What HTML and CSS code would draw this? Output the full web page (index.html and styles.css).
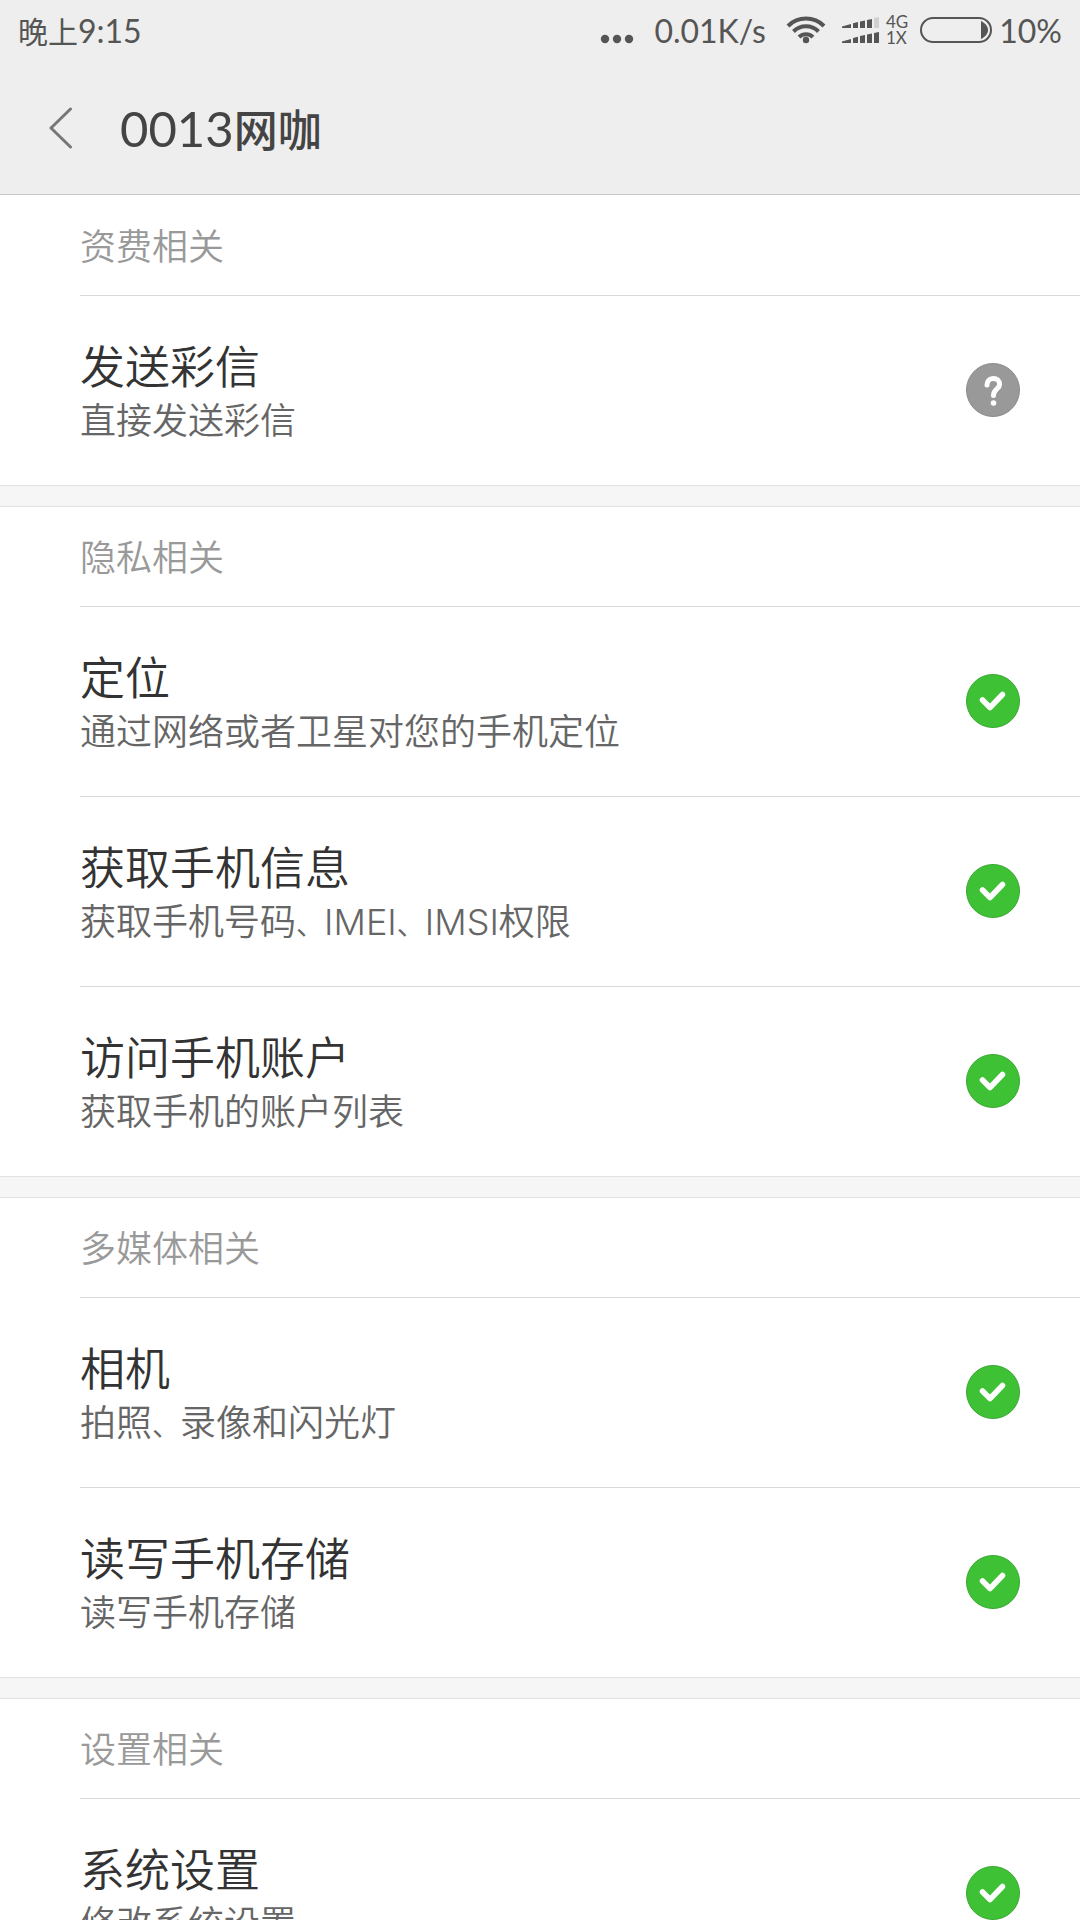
FILE: index.html
```html
<!DOCTYPE html>
<html lang="zh-CN">
<head>
  <meta charset="utf-8">
  <meta name="viewport" content="width=device-width, initial-scale=1">
  <title>0013网咖</title>
  <link rel="stylesheet" href="styles.css">
</head>
<body>

<!-- 图标 -->
<svg class="sprite" aria-hidden="true">
  <symbol id="icon-check" viewBox="0 0 54 54">
    <circle cx="27" cy="27" r="26.5" fill="#3fc136" stroke="#3aa832"/>
    <path d="M16.500 26l7.500 7.500 12.500-13" fill="none" stroke="#fff" stroke-width="5.500" stroke-linecap="round" stroke-linejoin="round"/>
  </symbol>
  <symbol id="icon-ask" viewBox="0 0 54 54">
    <circle cx="27" cy="27" r="26.500" fill="#999" stroke="#8c8c8c"/>
    <path d="M21 22c0-4 2.500-6.500 6.300-6.500s6.300 2.300 6.300 5.700c0 5-6.100 4.600-6.100 11.300" fill="none" stroke="#fff" stroke-width="5" stroke-linecap="round"/>
    <circle cx="27.500" cy="40" r="2.800" fill="#fff"/>
  </symbol>
</svg>

<header class="header">
  <div class="status-bar">
    <div class="clock">晚上<span class="num">9:15</span></div>
    <div class="status-icons">
      <svg class="dots" width="34" height="54" viewBox="0 0 34 54" fill="#555">
        <circle cx="5" cy="39" r="4.200"/>
        <circle cx="17" cy="39" r="4.200"/>
        <circle cx="29" cy="39" r="4.200"/>
      </svg>
      <span class="num speed">0.01K/s</span>
      <svg class="wifi" width="40" height="54" viewBox="0 0 40 54" fill="none" stroke="#555" stroke-width="4">
        <path d="M2 26a25.500 25.500 0 0 1 36 0"/>
        <path d="M7.500 31.500a17.700 17.700 0 0 1 25 0"/>
        <path d="M13 37a10 10 0 0 1 14 0"/>
        <circle cx="20" cy="40" r="3.200" fill="#555" stroke="none"/>
      </svg>
      <svg class="signal" width="38" height="54" viewBox="0 0 38 54" fill="#555">
        <path d="M0 28v-1.500l9-2.500v4zM11 28v-4.700l5-1.300v6zM18 28v-6.500l5-1v7.500zM25 28v-8l5-1v9z"/>
        <path d="M32 28V18l5-1v11z" fill="#d0d0d0"/>
        <path d="M0 43v-1.500l9-2.500v4zM11 43v-5l5-1.300v6.300zM18 43v-7l5-1v8zM25 43v-8.500l5-1V43zM32 43V33l5-1v11z"/>
      </svg>
      <span class="network"><span>4G</span><span>1X</span></span>
      <svg class="battery" width="72" height="54" viewBox="0 0 72 54">
        <rect x="1" y="18" width="70" height="24" rx="12" fill="none" stroke="#555" stroke-width="2"/>
        <path d="M61 21c4 2 7 5 7 9s-3 7-7 9z" fill="#555"/>
      </svg>
      <span class="num">10%</span>
    </div>
  </div>
  <div class="title-bar">
    <button class="back" type="button" aria-label="返回">
      <svg width="24" height="42" viewBox="0 0 24 42" fill="none" stroke="#777" stroke-width="3" stroke-linecap="round" stroke-linejoin="round">
        <path d="M21.500 2L2 21l19.500 19"/>
      </svg>
    </button>
    <h1 class="title"><span class="num">0013</span>网咖</h1>
  </div>
</header>

<main class="groups">
  <section class="group">
    <h2 class="group-title">资费相关</h2>
    <ul class="list">
      <li><button class="item" type="button">
        <span class="text"><span class="name">发送彩信</span><span class="desc">直接发送彩信</span></span>
        <svg class="state"><use href="#icon-ask"/></svg>
      </button></li>
    </ul>
  </section>

  <section class="group">
    <h2 class="group-title">隐私相关</h2>
    <ul class="list">
      <li><button class="item" type="button">
        <span class="text"><span class="name">定位</span><span class="desc">通过网络或者卫星对您的手机定位</span></span>
        <svg class="state"><use href="#icon-check"/></svg>
      </button></li>
      <li><button class="item" type="button">
        <span class="text"><span class="name">获取手机信息</span><span class="desc">获取手机号码<span class="mark">、</span>IMEI<span class="mark">、</span>IMSI权限</span></span>
        <svg class="state"><use href="#icon-check"/></svg>
      </button></li>
      <li><button class="item" type="button">
        <span class="text"><span class="name">访问手机账户</span><span class="desc">获取手机的账户列表</span></span>
        <svg class="state"><use href="#icon-check"/></svg>
      </button></li>
    </ul>
  </section>

  <section class="group">
    <h2 class="group-title">多媒体相关</h2>
    <ul class="list">
      <li><button class="item" type="button">
        <span class="text"><span class="name">相机</span><span class="desc">拍照<span class="mark">、</span>录像和闪光灯</span></span>
        <svg class="state"><use href="#icon-check"/></svg>
      </button></li>
      <li><button class="item" type="button">
        <span class="text"><span class="name">读写手机存储</span><span class="desc">读写手机存储</span></span>
        <svg class="state"><use href="#icon-check"/></svg>
      </button></li>
    </ul>
  </section>

  <section class="group">
    <h2 class="group-title">设置相关</h2>
    <ul class="list">
      <li><button class="item" type="button">
        <span class="text"><span class="name">系统设置</span><span class="desc">修改系统设置</span></span>
        <svg class="state"><use href="#icon-check"/></svg>
      </button></li>
    </ul>
  </section>
</main>

</body>
</html>
```
FILE: styles.css
```css
* {
    box-sizing: border-box;
}
html {
    height: 100%;
    overflow: hidden;
}
body {
    height: 100%;
    margin: 0;
    overflow: auto;
    scrollbar-width: none;
    background: #f6f6f6;
    font-family: "Noto Sans CJK SC", sans-serif;
    color: #333;
}
.sprite {
    display: none;
}

/* 顶部 */
.header {
    background: #eee;
    border-bottom: 1px solid #c8c8c8;
}
.num {
    font-family: Lato, sans-serif;
}
.status-bar {
    display: flex;
    justify-content: space-between;
    height: 64px;
    padding: 0 18px;
    font-size: 30px;
    line-height: 62px;
    color: #555;
}
.status-bar .num {
    font-size: 32px;
}
.clock {
    line-height: 60px;
}
.status-icons {
    display: flex;
}
.speed {
    margin: 0 20px;
}
.signal {
    margin-left: 16px;
}
.network {
    display: flex;
    flex-direction: column;
    padding: 14px 12px 0 6px;
    font-family: Lato, sans-serif;
    font-size: 17px;
    line-height: 16px;
}
.battery {
    margin-right: 7px;
}
.title-bar {
    display: flex;
    align-items: center;
    height: 130px;
    padding-bottom: 2px;
}
.back {
    display: flex;
    justify-content: center;
    width: 120px;
    padding: 0 0 0 2px;
    border: 0;
    background: none;
}
.title {
    margin: 0;
    font-size: 44px;
    font-weight: 500;
    line-height: 60px;
    color: #444;
}
.title .num {
    font-size: 49px;
    font-weight: 400;
}

/* 权限分组 */
.group {
    border-bottom: 1px solid #e2e2e2;
    background: #fff;
}
.group:first-child {
    padding-top: 1px;
}
.group + .group {
    margin-top: 20px;
    border-top: 1px solid #e2e2e2;
}
.group-title {
    margin: 0 0 0 80px;
    padding-bottom: 2px;
    border-bottom: 1px solid #d9d9d9;
    font-size: 36px;
    font-weight: 350;
    line-height: 97px;
    color: #999;
}
.list {
    margin: 0;
    padding: 0;
    list-style: none;
}
.list li {
    padding-left: 80px;
}
.list li + li .item {
    border-top: 1px solid #d9d9d9;
}
.item {
    display: flex;
    align-items: center;
    justify-content: space-between;
    width: 100%;
    padding: 38px 60px 39px 0;
    border: 0;
    background: none;
    font-family: inherit;
    text-align: left;
}
.text {
    display: flex;
    flex-direction: column;
}
.name {
    font-size: 45px;
    font-weight: 350;
    line-height: 62px;
    color: #333;
}
.desc {
    font-family: Inter, "Noto Sans CJK SC", sans-serif;
    font-size: 36px;
    font-weight: 350;
    line-height: 50px;
    color: #666;
}
.mark {
    font-size: 28px;
    line-height: 1;
}
.state {
    width: 54px;
    height: 54px;
}
```
